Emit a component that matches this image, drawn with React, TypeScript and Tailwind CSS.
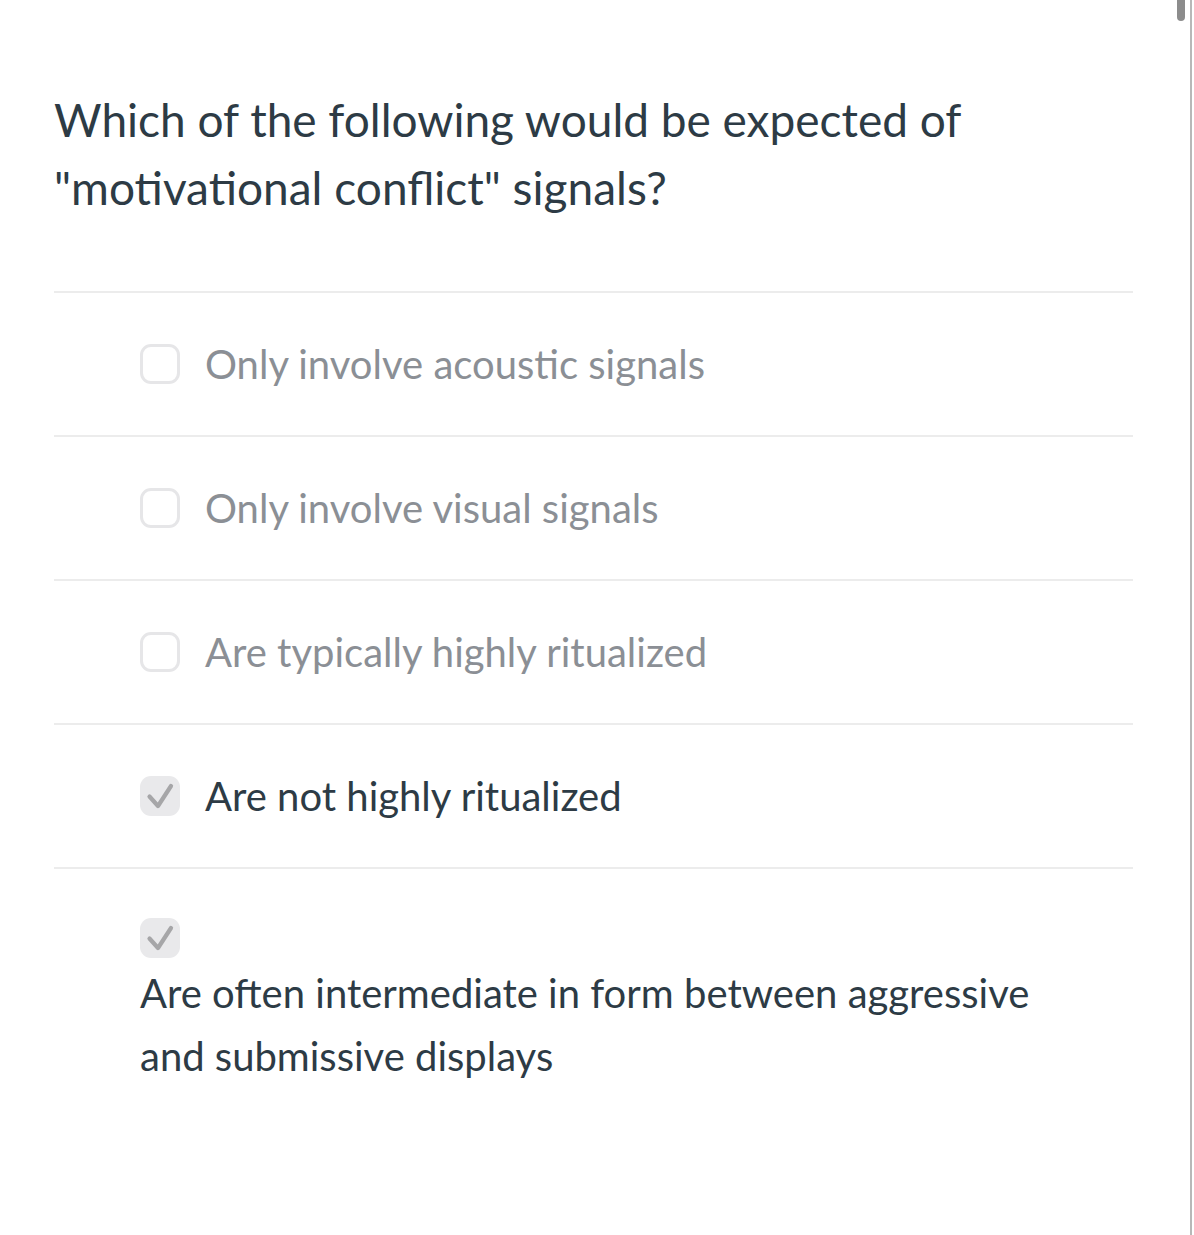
type Option = { id: string; label: string; checked: boolean; stacked?: boolean };

const OPTIONS: Option[] = [
  { id: "a", label: "Only involve acoustic signals", checked: false },
  { id: "b", label: "Only involve visual signals", checked: false },
  { id: "c", label: "Are typically highly ritualized", checked: false },
  { id: "d", label: "Are not highly ritualized", checked: true },
  {
    id: "e",
    label: "Are often intermediate in form between aggressive and submissive displays",
    checked: true,
    stacked: true,
  },
];

function Box({ checked }: { checked: boolean }) {
  return checked ? (
    <span className="flex h-[40px] w-[40px] shrink-0 items-center justify-center rounded-[11px] bg-[#e9e9eb]">
      <svg viewBox="0 0 40 40" className="h-[40px] w-[40px]" fill="none">
        <path
          d="M9.5 20.5L18 30L31 10"
          stroke="#a6a6a8"
          strokeWidth={4.2}
          strokeLinecap="round"
          strokeLinejoin="round"
        />
      </svg>
    </span>
  ) : (
    <span className="h-[40px] w-[40px] shrink-0 rounded-[11px] border-[3px] border-[#e6e6e8] bg-white" />
  );
}

export default function App() {
  return (
    <div className="relative min-h-[1235px] bg-white font-['Lato','Noto_Sans',sans-serif]">
      <div className="ml-[54px] w-[1079px] pt-[86px]">
        <h1 className="text-[46px] leading-[68px] text-[#2d3b45]">
          Which of the following would be expected of
          <br />
          "motivational conflict" signals?
        </h1>
        <ul className="mt-[69px]">
          {OPTIONS.map((o) => (
            <li key={o.id} className="border-t-2 border-[#ececec]">
              {o.stacked ? (
                <div className="pl-[86px] pt-[49px]">
                  <Box checked={o.checked} />
                  <p className="mt-[4px] w-[960px] text-[40px] leading-[63px] text-[#2d3b45]">
                    {o.label}
                  </p>
                </div>
              ) : (
                <div className="flex h-[142px] items-center gap-[25px] pl-[86px]">
                  <Box checked={o.checked} />
                  <span
                    className={
                      o.checked
                        ? "text-[40px] text-[#2d3b45]"
                        : "text-[40px] text-[#8b8f95]"
                    }
                  >
                    {o.label}
                  </span>
                </div>
              )}
            </li>
          ))}
        </ul>
      </div>
      <div className="absolute right-[2px] top-0 h-full w-[2px] bg-[#b8b8b8]" />
      <div className="absolute right-[9px] top-0 h-[21px] w-[8px] rounded-b-full bg-[#8c8c8c]" />
    </div>
  );
}
